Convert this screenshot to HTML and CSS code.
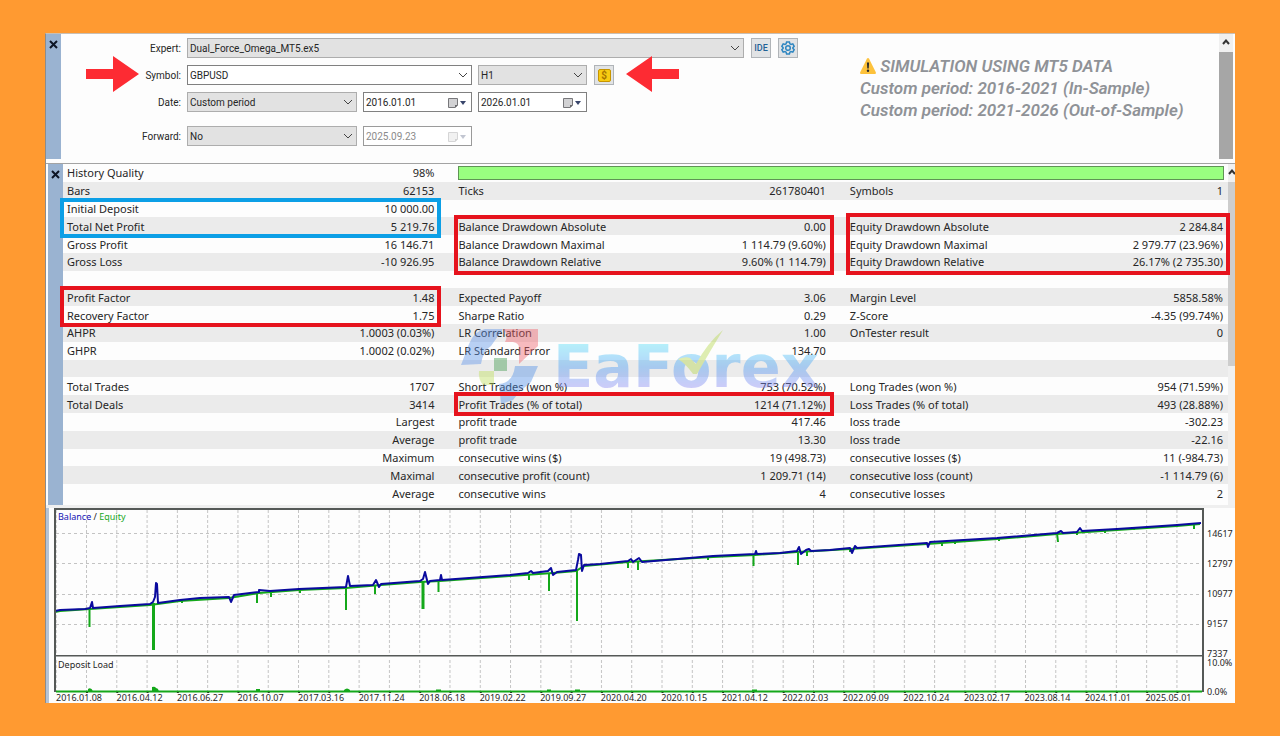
FILE: index.html
```html
<!DOCTYPE html>
<html lang="en">
<head>
<meta charset="utf-8">
<title>Strategy Tester Report</title>
<link rel="stylesheet" href="styles.css">
</head>
<body>
<main class="board">
  <section class="settings">
    <div class="strip"><button class="close" aria-label="Close settings"><svg width="9" height="9" viewBox="0 0 9 9"><path d="M1 1l7 7M8 1l-7 7"/></svg></button></div>
    <form class="form">
      <div class="row">
        <label class="caption" for="expert">Expert:</label>
        <span class="field expert"><select id="expert"><option>Dual_Force_Omega_MT5.ex5</option></select><svg class="chev" width="10" height="6" viewBox="0 0 10 6"><path d="M1 1l4 4 4-4"/></svg></span>
        <button type="button" class="tool ide">IDE</button>
        <button type="button" class="tool" aria-label="Expert settings"><svg width="14" height="14" viewBox="0 0 14 14"><path class="gear" d="M5.6 1h2.8l.5 1.8 1.1.6 1.8-.5 1.4 2.4L11.900 6.600v.8l1.300 1.300-1.400 2.400-1.800-.5-1.100.6-.5 1.800H5.600l-.5-1.800-1.100-.6-1.800.5L.800 8.700l1.300-1.300v-.8L.800 5.300l1.400-2.400 1.800.5 1.100-.6z"/><circle class="gear" cx="7" cy="7" r="2.300"/></svg></button>
      </div>
      <div class="row">
        <label class="caption" for="symbol">Symbol:</label>
        <span class="field symbol white"><select id="symbol"><option>GBPUSD</option></select><svg class="chev" width="10" height="6" viewBox="0 0 10 6"><path d="M1 1l4 4 4-4"/></svg></span>
        <span class="field small"><select aria-label="Timeframe"><option>H1</option></select><svg class="chev" width="10" height="6" viewBox="0 0 10 6"><path d="M1 1l4 4 4-4"/></svg></span>
        <button type="button" class="tool" aria-label="Symbol specification"><span class="coin">$</span></button>
      </div>
      <div class="row">
        <label class="caption" for="period">Date:</label>
        <span class="field medium"><select id="period"><option>Custom period</option></select><svg class="chev" width="10" height="6" viewBox="0 0 10 6"><path d="M1 1l4 4 4-4"/></svg></span>
        <span class="field small white"><input type="text" aria-label="From" value="2016.01.01"><svg class="cal" width="20" height="12" viewBox="0 0 20 12"><path class="page" d="M1.500 1.500h9v6.500l-2.500 2.500h-6.500z"/><path class="fold" d="M8 11V8h3z"/><path class="tri" d="M13 4h6l-3 4z"/></svg></span>
        <span class="field small white"><input type="text" aria-label="To" value="2026.01.01"><svg class="cal" width="20" height="12" viewBox="0 0 20 12"><path class="page" d="M1.500 1.500h9v6.500l-2.500 2.500h-6.500z"/><path class="fold" d="M8 11V8h3z"/><path class="tri" d="M13 4h6l-3 4z"/></svg></span>
      </div>
      <div class="row forward">
        <label class="caption" for="forward">Forward:</label>
        <span class="field medium"><select id="forward"><option>No</option></select><svg class="chev" width="10" height="6" viewBox="0 0 10 6"><path d="M1 1l4 4 4-4"/></svg></span>
        <span class="field small white off"><input type="text" aria-label="Forward date" value="2025.09.23" disabled><svg class="cal" width="20" height="12" viewBox="0 0 20 12"><path class="page" d="M1.500 1.500h9v6.500l-2.500 2.500h-6.500z"/><path class="fold" d="M8 11V8h3z"/><path class="tri" d="M13 4h6l-3 4z"/></svg></span>
      </div>
      <svg class="arrow right" width="53" height="36" viewBox="0 0 53 36"><path d="M0 13h27V0l26 18-26 18V23H0z"/></svg>
      <svg class="arrow left" width="53" height="36" viewBox="0 0 53 36"><path d="M53 13H26V0L0 18l26 18V23h27z"/></svg>
    </form>
    <div class="note">
      <p><svg class="warn" width="16" height="16" viewBox="0 0 16 16"><path fill="#fdc23c" d="M8 0q.7 0 1.100.8l6.700 13.500q.5 1.500-.8 1.700H1q-1.300-.2-.8-1.700L6.900.8Q7.300 0 8 0z"/><path fill="#2b2b2b" d="M6.900 4.500h2.200l-.4 6H7.300z"/><circle fill="#2b2b2b" cx="8" cy="12.800" r="1.200"/></svg> SIMULATION USING MT5 DATA</p>
      <p>Custom period: 2016-2021 (In-Sample)</p>
      <p>Custom period: 2021-2026 (Out-of-Sample)</p>
    </div>
    <div class="bar"><svg width="8" height="6" viewBox="0 0 8 6"><path d="M1 5l3-3.500L7 5"/></svg><div class="thumb"></div></div>
  </section>

  <section class="stats">
    <div class="strip"><button class="close" aria-label="Close report"><svg width="9" height="9" viewBox="0 0 9 9"><path d="M1 1l7 7M8 1l-7 7"/></svg></button></div>
    <div class="report">
      <table class="grid">
        <colgroup><col class="name"><col class="val"><col class="name"><col class="val"><col class="name"><col></colgroup>
        <tbody>
        <tr><td>History Quality</td><td>98%</td><td colspan="4" class="meter"><div class="quality"></div></td></tr>
        <tr><td>Bars</td><td>62153</td><td>Ticks</td><td>261780401</td><td>Symbols</td><td>1</td></tr>
        <tr><td>Initial Deposit</td><td>10 000.00</td><td></td><td></td><td></td><td></td></tr>
        <tr><td>Total Net Profit</td><td>5 219.76</td><td>Balance Drawdown Absolute</td><td>0.00</td><td>Equity Drawdown Absolute</td><td>2 284.84</td></tr>
        <tr><td>Gross Profit</td><td>16 146.71</td><td>Balance Drawdown Maximal</td><td>1 114.79 (9.60%)</td><td>Equity Drawdown Maximal</td><td>2 979.77 (23.96%)</td></tr>
        <tr><td>Gross Loss</td><td>-10 926.95</td><td>Balance Drawdown Relative</td><td>9.60% (1 114.79)</td><td>Equity Drawdown Relative</td><td>26.17% (2 735.30)</td></tr>
        <tr><td></td><td></td><td></td><td></td><td></td><td></td></tr>
        <tr><td>Profit Factor</td><td>1.48</td><td>Expected Payoff</td><td>3.06</td><td>Margin Level</td><td>5858.58%</td></tr>
        <tr><td>Recovery Factor</td><td>1.75</td><td>Sharpe Ratio</td><td>0.29</td><td>Z-Score</td><td>-4.35 (99.74%)</td></tr>
        <tr><td>AHPR</td><td>1.0003 (0.03%)</td><td>LR Correlation</td><td>1.00</td><td>OnTester result</td><td>0</td></tr>
        <tr><td>GHPR</td><td>1.0002 (0.02%)</td><td>LR Standard Error</td><td>134.70</td><td></td><td></td></tr>
        <tr><td></td><td></td><td></td><td></td><td></td><td></td></tr>
        <tr><td>Total Trades</td><td>1707</td><td>Short Trades (won %)</td><td>753 (70.52%)</td><td>Long Trades (won %)</td><td>954 (71.59%)</td></tr>
        <tr><td>Total Deals</td><td>3414</td><td>Profit Trades (% of total)</td><td>1214 (71.12%)</td><td>Loss Trades (% of total)</td><td>493 (28.88%)</td></tr>
        <tr><td></td><td>Largest</td><td>profit trade</td><td>417.46</td><td>loss trade</td><td>-302.23</td></tr>
        <tr><td></td><td>Average</td><td>profit trade</td><td>13.30</td><td>loss trade</td><td>-22.16</td></tr>
        <tr><td></td><td>Maximum</td><td>consecutive wins ($)</td><td>19 (498.73)</td><td>consecutive losses ($)</td><td>11 (-984.73)</td></tr>
        <tr><td></td><td>Maximal</td><td>consecutive profit (count)</td><td>1 209.71 (14)</td><td>consecutive loss (count)</td><td>-1 114.79 (6)</td></tr>
        <tr><td></td><td>Average</td><td>consecutive wins</td><td>4</td><td>consecutive losses</td><td>2</td></tr>
        </tbody>
      </table>
      <div class="mark">
        <svg width="80" height="76" viewBox="0 0 80 76"><path fill="#5b93ea" d="M0 36L8 15Q13 2 24 0H42L30 17Q22 22 20 35z"/><path fill="#f0606a" d="M42 0H77V17L58 35V19Q58 14 52 13H44Q48 6 42 0z"/><path fill="#3f9a4c" d="M33 29h13v13H33z"/><path fill="#bfe05a" d="M18 42h15v14H22q-5-6-4-14z"/><path fill="#4f8fe8" d="M54 37H77L70 53Q66 57 60 61L52 71 40 75 38 55Q52 54 54 37z"/></svg>
        <span class="word">EaForex</span>
        <svg class="tick" width="46" height="46" viewBox="0 0 46 46"><path fill="#b5d84a" d="M0 29q8-3 12-1l6 6Q30 12 45 0 34 18 19 44h-4Q8 34 0 29z"/></svg>
      </div>
      <div class="frame deposit"></div>
      <div class="frame factor"></div>
      <div class="frame balance"></div>
      <div class="frame equity"></div>
      <div class="frame trades"></div>
    </div>
    <div class="bar thin"><svg width="8" height="6" viewBox="0 0 8 6"><path d="M1 5l3-3.500L7 5"/></svg><div class="thumb"></div></div>
  </section>

  <section class="chart">
    <div class="plot">
      <svg class="lines" viewBox="54 508 1150 185" preserveAspectRatio="none">
        <defs><pattern id="cols" x="86" y="510" width="30.290" height="5" patternUnits="userSpaceOnUse"><path d="M.5 0v3" stroke="#c3c3c3"/></pattern></defs>
        <path fill="url(#cols)" d="M56 510h1146v145H56zM56 659h1146v32H56z"/>
        <path stroke="#c3c3c3" stroke-dasharray="3 3" d="M56 533.500h1146M56 563.500h1146M56 594.500h1146M56 624.500h1146"/>
        <path fill="none" stroke="#14a81a" stroke-width="2" d="M55 612L60 611 90 609 120 607 150 605 180 601 229 598 259 593 299 590 346 588 381 585 420 582 440 581 510 576 553 573 576 571 584 566 628 562 713 557 755 555 797 552 850 549 927 544 997 539 1057 534 1117 530 1177 526 1200 524"/>
        <path fill="none" stroke="#14a81a" stroke-width="2" d="M89.500 609v18M153.500 603v47M257 592v11M271 591v6M182 600v3M300 589v4M346 587v23M375 585v9M423 581v28M438.500 581v11M529 574v6M549 573v18M577 570v51M628 563v5M638 562v8M708 557v3M753.500 555v11M798 553v12M807 552v4M850 548v4M942 542v4M955 541v3M999 538v3M1057 533l1 9M1077 531v4M1105 530v3M1134 528v2M1177 524v3M1194 523v6"/>
        <path fill="none" stroke="#14a81a" stroke-width="3" d="M153.500 603v47M423 581v28"/>
        <path fill="none" stroke="#0a0a9e" stroke-width="2" stroke-linejoin="round" d="M55 611L60 610 85 609 90 608 92 602 93 608 120 606 150 604 153 602 155 597 156 583 157 584 158 603 180 600 200 598 229 597 231 602 234 595 259 592V590L270 591 299 589 346 587 348 576 350 586 373 585 376 580 379 587 381 584 420 581 423 579 425 572 428 584 430 581 440 580 441 575 442 580 510 575 528 573 531 571 533 573 548 571 551 568 553 575 557 572 576 570 578 560 579 554 581 555 582 571 584 565 600 564 628 561 631 559 633 562 639 558 642 562 713 556 755 554 756 551 757 554 780 553 797 551 799 547 801 554 806 550 809 549 811 551 830 550 850 548 852 553 855 546 857 548 927 543 928 547 930 542 997 538 1057 533 1061 531 1063 533 1077 532 1080 528 1082 531 1117 529 1177 525 1201 523"/>
        <path fill="#14a81a" d="M56 690.500h1146v2H56zM88 689q3-2 5 2h-5zM152 687q3-1 4 1 2 0 3 3h-7zM256 689h4v2h-4zM344 690q3-3 6 0v1h-6zM436 689.500h5v1h-5zM547 689.500h4v1h-4zM575 689.500h5v1h-5zM752 689.500h5v1h-5z"/>
        <path fill="none" stroke="#555957" stroke-width="2" d="M55 692V509h1148v183M54 656h1150"/>
        <path stroke="#a8aaa9" d="M56 656.500h1146"/>
        <path stroke="#555957" d="M1203 533.500h3M1203 563.500h3M1203 594.500h3M1203 624.500h3M1203 654.500h3"/>
        <path stroke="#204020" stroke-dasharray="2 28.290" d="M86 692.500h1117"/>
      </svg>
      <div class="legend"><span class="bal">Balance</span> / <span class="eq">Equity</span></div>
      <div class="legend load">Deposit Load</div>
      <div class="dates"><span>2016.01.08</span><span>2016.04.12</span><span>2016.06.27</span><span>2016.10.07</span><span>2017.03.16</span><span>2017.11.24</span><span>2018.06.18</span><span>2019.02.22</span><span>2019.09.27</span><span>2020.04.20</span><span>2020.10.15</span><span>2021.04.12</span><span>2022.02.03</span><span>2022.09.09</span><span>2022.10.24</span><span>2023.02.17</span><span>2023.08.14</span><span>2024.11.01</span><span>2025.05.01</span></div>
    </div>
    <div class="scale">
      <div class="money"><span>14617</span><span>12797</span><span>10977</span><span>9157</span><span>7337</span></div>
      <div class="percent"><span>10.0%</span><span>0.0%</span></div>
    </div>
  </section>
</main>
</body>
</html>
```
FILE: styles.css
```css
* { box-sizing: border-box; }
body {
  margin: 0;
  min-height: 100vh;
  padding: 33px 45px;
  background: #ff9a31;
  font-family: "Noto Sans", "Open Sans", sans-serif;
  font-size: 11px;
  color: #262626;
}
p { margin: 0; }
button, select, input { font: inherit; color: inherit; margin: 0; }
.board {
  background: #fdfdfd;
  border-left: 1px solid #8c8c8c;
  border-top: 1px solid #c9bfb4;
}

.strip {
  flex: none;
  width: 15px;
  background: #9ab3d1;
}
.close {
  display: block;
  width: 15px;
  height: 19px;
  padding: 0;
  border: 0;
  background: none;
}
.close svg { display: block; margin: 1px auto 0 3px; }
.close path { stroke: #0e1626; stroke-width: 2; }

.settings { display: flex; height: 125px; }
.form {
  position: relative;
  flex: none;
  width: 760px;
  padding-top: 4px;
  font-family: Roboto, sans-serif;
  font-size: 10px;
}
.row { display: flex; align-items: center; gap: 6px; margin-bottom: 7px; }
.row.forward { margin-top: 14px; }
.caption { width: 120px; text-align: right; }
.field {
  position: relative;
  display: flex;
  height: 20px;
  border: 1px solid #adadad;
  background: #e2e2e2;
}
.field.white { background: #fff; border-color: #808080; }
.expert { width: 557px; }
.symbol { width: 285px; }
.medium { width: 170px; }
.small { width: 109px; }
.field select, .field input {
  width: 100%;
  appearance: none;
  border: 0;
  border-radius: 0;
  padding: 0 2px;
  background: transparent;
  outline: 0;
}
.field.off { color: #8b8b8b; border-color: #9a9a9a; }
.chev { position: absolute; right: 3px; top: 6px; pointer-events: none; }
.chev path { fill: none; stroke: #444; }
.cal { position: absolute; right: 4px; top: 4px; pointer-events: none; }
.page { fill: #d2d2d4; stroke: #77777a; }
.fold { fill: #6a6a6d; }
.tri { fill: #38456b; }
.off .cal { opacity: .3; }
.tool {
  display: flex;
  align-items: center;
  justify-content: center;
  width: 20px;
  height: 20px;
  margin-left: 1px;
  padding: 0;
  border: 1px solid #b0b4b8;
  background: #e1e3e5;
}
.ide { font-size: 9px; font-weight: 500; color: #1f6296; }
.gear { fill: none; stroke: #2e86c1; stroke-width: 1.5; }
.coin {
  width: 13px;
  height: 13px;
  border: 1px solid #c79500;
  border-radius: 2px;
  background: #f7cb12;
  color: #a87400;
  font-size: 10px;
  font-weight: 700;
  line-height: 11px;
}
.arrow { position: absolute; top: 22px; fill: #fd2b33; }
.arrow.right { left: 25px; }
.arrow.left { left: 565px; }
.note {
  flex: 1;
  padding: 21px 0 0 39px;
  font: italic 600 17px/22px Roboto, sans-serif;
  color: #8f9297;
}
.warn { vertical-align: -2px; }
.bar {
  display: flex;
  flex-direction: column;
  align-items: center;
  width: 14px;
  margin-right: 2px;
  background: #f0f0f0;
}
.bar svg { flex: none; margin: 5px 0 7px; }
.bar path { fill: none; stroke: #333; stroke-width: 2; }
.thumb { width: 100%; flex: 1; background: #a6a6a6; }

.stats {
  display: flex;
  height: 345px;
  margin-top: 4px;
  padding-left: 2px;
  border-top: 1px solid #a3a3a3;
  border-bottom: 3px solid #efefef;
}
.report { position: relative; flex: 1; }
.grid {
  width: 100%;
  height: 338px;
  table-layout: fixed;
  border-collapse: collapse;
}
.grid tr { height: 17px; }
.name { width: 18%; }
.val { width: 15.6%; }
.grid td {
  padding: 0 0 0 4px;
  line-height: 15px;
  white-space: nowrap;
}
.grid tr:nth-child(even) { background: #ebebeb; }
.grid td:nth-child(even) { text-align: right; padding: 0 20px 0 0; }
.grid td:last-child { padding-right: 5px; }
.grid td.meter { padding: 0 4px; }
.quality { height: 14px; border: 1px solid #5f9455; background: #99ff80; }
.frame { position: absolute; border: 4px solid #e6131d; }
.deposit { left: -3px; top: 34px; width: calc(33.6% - 10px); height: 40px; border-color: #0c9fe6; }
.factor { left: -3px; top: 122px; width: calc(33.6% - 10px); height: 41px; }
.balance { left: 33.6%; top: 51px; width: calc(33.6% - 12px); height: 60px; }
.equity { left: 67.2%; top: 49px; right: -2px; height: 62px; }
.trades { left: 33.6%; top: 228px; width: calc(33.6% - 12px); height: 24px; }
.mark {
  position: absolute;
  left: 398px;
  top: 165px;
  display: flex;
  align-items: center;
  gap: 12px;
  opacity: .42;
}
.word {
  font: 700 59px/64px "DejaVu Sans", sans-serif;
  background: linear-gradient(180deg, #55dcf8 15%, #4a9df5 50%, #8f86f2 85%);
  background-clip: text;
  color: transparent;
}
.tick { position: absolute; left: 217px; top: 1px; }
.bar.thin { width: 7px; margin: 0; overflow: hidden; }
.thin .thumb { background: #cdcdcd; flex: none; height: 184px; }

.chart {
  display: flex;
  height: 195px;
  padding-left: 5px;
  border-left: 3px solid #b4c3d6;
  font-size: 9px;
  line-height: 10px;
}
.plot { position: relative; flex: 1; }
.lines { display: block; width: 100%; height: 185px; }
.dates {
  display: grid;
  grid-template-columns: repeat(19, 1fr);
  padding-left: 2px;
  margin-right: -2px;
}
.legend { position: absolute; left: 4px; top: 4px; }
.load { top: 152px; }
.bal { color: #1414b4; }
.eq { color: #19a81f; }
.scale { width: 31px; padding-left: 3px; }
.money {
  display: flex;
  flex-direction: column;
  gap: 20px;
  height: 149px;
  padding-top: 21px;
  overflow: hidden;
}
.percent {
  display: flex;
  flex-direction: column;
  justify-content: space-between;
  height: 40px;
  padding-top: 1px;
}
```
